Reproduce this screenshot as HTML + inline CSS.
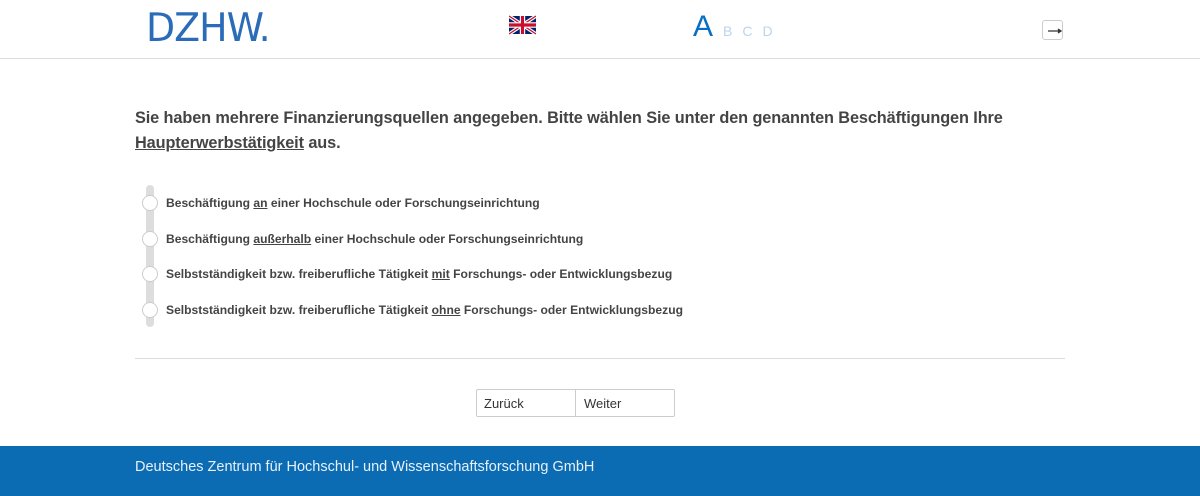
<!DOCTYPE html>
<html><head><meta charset="utf-8"><style>
body{margin:0;width:1200px;height:496px;overflow:hidden;background:#fff;font-family:"Liberation Sans",sans-serif;color:#333;position:relative}
.hdr{position:absolute;left:0;top:0;width:1200px;height:58px;border-bottom:1px solid #ddd}
.logo{position:absolute;left:146px;top:6px;font-size:39px;color:#2b6cb8;letter-spacing:-1px;font-family:"DejaVu Sans",sans-serif;font-weight:normal;transform:scaleX(0.97);transform-origin:left}
.flag{position:absolute;left:509px;top:15px}
.abc{position:absolute;left:693px;top:10px;color:#0a6fc2;font-size:30px}
.abc span{font-size:14px;color:#b9d5ee;margin-left:10px}
.exit{position:absolute;left:1042px;top:20px;width:19px;height:18px;border:1px solid #ccc;border-radius:3px}
h1{position:absolute;left:135px;top:106px;margin:0;font-size:16.3px;font-weight:bold;line-height:25px;width:930px;color:#444;letter-spacing:-0.1px}
.bar{position:absolute;left:146px;top:185px;width:8px;height:142px;background:#ddd;border-radius:4px}
.opt{position:absolute;left:135px;font-size:12.1px;font-weight:bold;color:#444}
.opt i{position:absolute;left:7px;top:-2px;width:14px;height:14px;border:1px solid #ccc;border-radius:50%;background:#fff}
.opt b{position:absolute;left:31px;white-space:nowrap;top:-1px}
u{text-decoration:underline}
.hr{position:absolute;left:135px;top:358px;width:930px;border-top:1px solid #ddd}
.btns{position:absolute;left:476px;top:389px;width:197px;height:26px;border:1px solid #ccc;border-radius:2px;font-size:13px}
.btns div{position:absolute;top:6px}
.ft{position:absolute;left:0;top:446px;width:1200px;height:50px;background:#0b6cb4;color:#e8f0f8;font-size:14.5px}
</style></head><body>
<div class="hdr">
<div class="logo">DZHW.</div>
<svg class="flag" width="27" height="20" viewBox="0 0 60 40"><rect width="60" height="40" fill="#012169"/><path d="M0,0L60,40M60,0L0,40" stroke="#fff" stroke-width="8"/><path d="M0,0L60,40M60,0L0,40" stroke="#C8102E" stroke-width="3"/><path d="M30,0V40M0,20H60" stroke="#fff" stroke-width="12"/><path d="M30,0V40M0,20H60" stroke="#C8102E" stroke-width="7"/></svg>
<div class="abc">A<span>B</span><span>C</span><span>D</span></div>
<div class="exit"><svg width="19" height="18"><path d="M5,10H18M15,8L18,10L15,12" stroke="#333" stroke-width="1.3" fill="#333"/></svg></div>
</div>
<h1>Sie haben mehrere Finanzierungsquellen angegeben. Bitte wählen Sie unter den genannten Beschäftigungen Ihre <u>Haupterwerbstätigkeit</u> aus.</h1>
<div class="bar"></div>
<div class="opt" style="top:197px"><i></i><b>Beschäftigung <u>an</u> einer Hochschule oder Forschungseinrichtung</b></div>
<div class="opt" style="top:233px"><i></i><b>Beschäftigung <u>außerhalb</u> einer Hochschule oder Forschungseinrichtung</b></div>
<div class="opt" style="top:268px"><i></i><b>Selbstständigkeit bzw. freiberufliche Tätigkeit <u>mit</u> Forschungs- oder Entwicklungsbezug</b></div>
<div class="opt" style="top:304px"><i></i><b>Selbstständigkeit bzw. freiberufliche Tätigkeit <u>ohne</u> Forschungs- oder Entwicklungsbezug</b></div>
<div class="hr"></div>
<div class="btns"><div style="left:7px">Zurück</div><div style="left:98px;top:0;height:26px;border-left:1px solid #ccc"></div><div style="left:107px">Weiter</div></div>
<div class="ft"><div style="position:absolute;left:135px;top:13px">Deutsches Zentrum für Hochschul- und Wissenschaftsforschung GmbH</div></div>
</body></html>
